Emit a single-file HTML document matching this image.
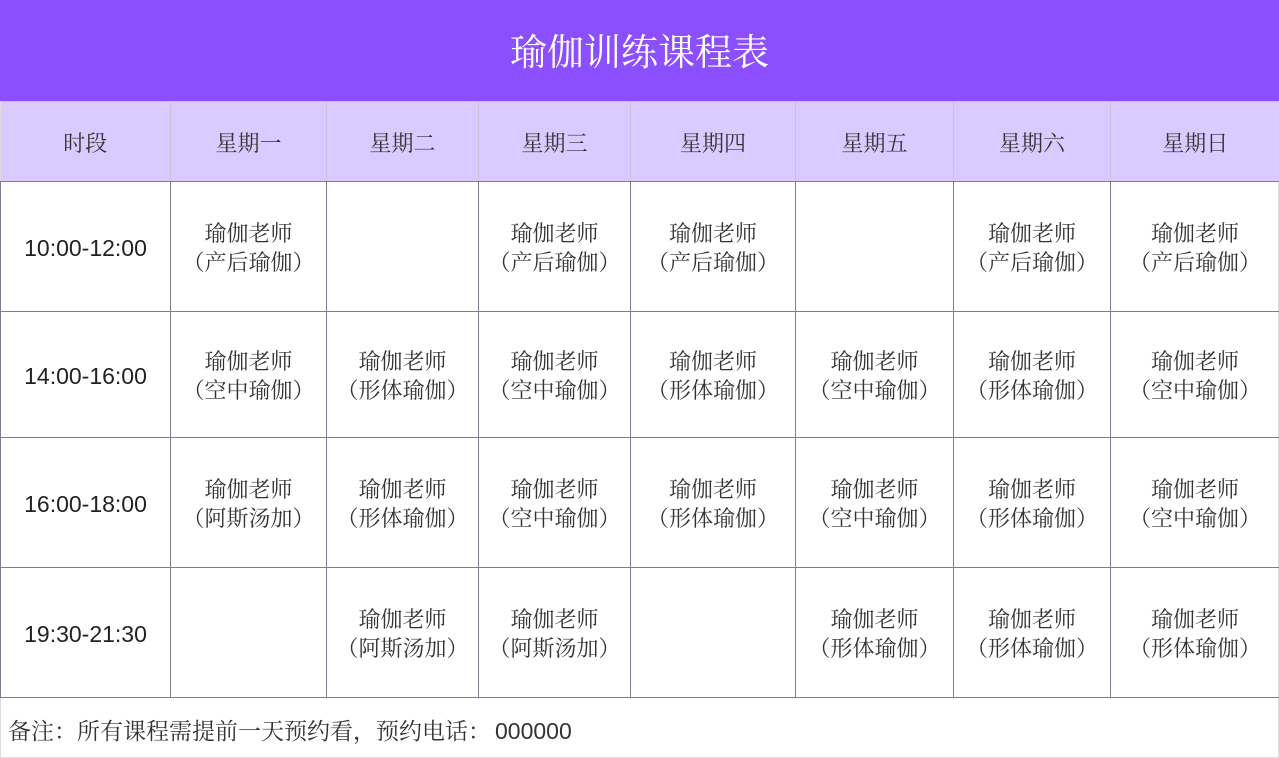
<!DOCTYPE html>
<html><head><meta charset="utf-8"><style>
*{margin:0;padding:0;box-sizing:border-box}
body{width:1279px;height:758px;overflow:hidden;background:#fff;font-family:"Liberation Serif","Noto Serif CJK SC",serif;color:#333}
.wrap{position:absolute;left:0;top:0;width:1279px;height:758px;border:1px solid #ddd}
.title{position:absolute;left:0;top:0;width:1279px;height:101px;background:#8c4fff;color:#fff;font-size:37px;text-align:center;line-height:108px}
table{position:absolute;left:0;top:101px;border-collapse:collapse;table-layout:fixed;width:1279px}
td{text-align:center;vertical-align:middle;font-size:22px;line-height:29px;border:1px solid #7d7d8f;padding-top:3px}
tr.h td{background:#dbcaff;height:80px;border-color:#c9c3d6;border-bottom:1px solid #7d7d8f}
tr.h td:first-child{border-left:none}
td:first-child{border-left:1px solid #7d7d8f;font-size:23px;color:#222;font-family:"Liberation Sans","Noto Sans CJK SC",sans-serif}
tr.h td:first-child{font-family:"Liberation Serif","Noto Serif CJK SC",serif;font-size:22px;color:#333}
td:last-child{border-right:1px solid #7d7d8f}
tr.h td:last-child{border-right:none}
.foot{position:absolute;left:8px;top:713px;font-size:23px;color:#333;white-space:nowrap}
.foot span.n{font-family:"Liberation Sans",sans-serif;font-size:23px;margin-left:4px}
</style></head><body>
<div class="wrap"></div>
<div class="title">瑜伽训练课程表</div>
<table>
<colgroup><col style="width:170px"><col style="width:156px"><col style="width:152px"><col style="width:152px"><col style="width:165px"><col style="width:158px"><col style="width:157px"><col style="width:169px"></colgroup>
<tr class="h"><td>时段</td><td>星期一</td><td>星期二</td><td>星期三</td><td>星期四</td><td>星期五</td><td>星期六</td><td>星期日</td></tr>
<tr style="height:130px"><td>10:00-12:00</td><td>瑜伽老师<br>（产后瑜伽）</td><td></td><td>瑜伽老师<br>（产后瑜伽）</td><td>瑜伽老师<br>（产后瑜伽）</td><td></td><td>瑜伽老师<br>（产后瑜伽）</td><td>瑜伽老师<br>（产后瑜伽）</td></tr>
<tr style="height:126px"><td>14:00-16:00</td><td>瑜伽老师<br>（空中瑜伽）</td><td>瑜伽老师<br>（形体瑜伽）</td><td>瑜伽老师<br>（空中瑜伽）</td><td>瑜伽老师<br>（形体瑜伽）</td><td>瑜伽老师<br>（空中瑜伽）</td><td>瑜伽老师<br>（形体瑜伽）</td><td>瑜伽老师<br>（空中瑜伽）</td></tr>
<tr style="height:130px"><td>16:00-18:00</td><td>瑜伽老师<br>（阿斯汤加）</td><td>瑜伽老师<br>（形体瑜伽）</td><td>瑜伽老师<br>（空中瑜伽）</td><td>瑜伽老师<br>（形体瑜伽）</td><td>瑜伽老师<br>（空中瑜伽）</td><td>瑜伽老师<br>（形体瑜伽）</td><td>瑜伽老师<br>（空中瑜伽）</td></tr>
<tr style="height:130px"><td>19:30-21:30</td><td></td><td>瑜伽老师<br>（阿斯汤加）</td><td>瑜伽老师<br>（阿斯汤加）</td><td></td><td>瑜伽老师<br>（形体瑜伽）</td><td>瑜伽老师<br>（形体瑜伽）</td><td>瑜伽老师<br>（形体瑜伽）</td></tr>
</table>
<div class="foot">备注：所有课程需提前一天预约看，预约电话：<span class="n">000000</span></div>
</body></html>
